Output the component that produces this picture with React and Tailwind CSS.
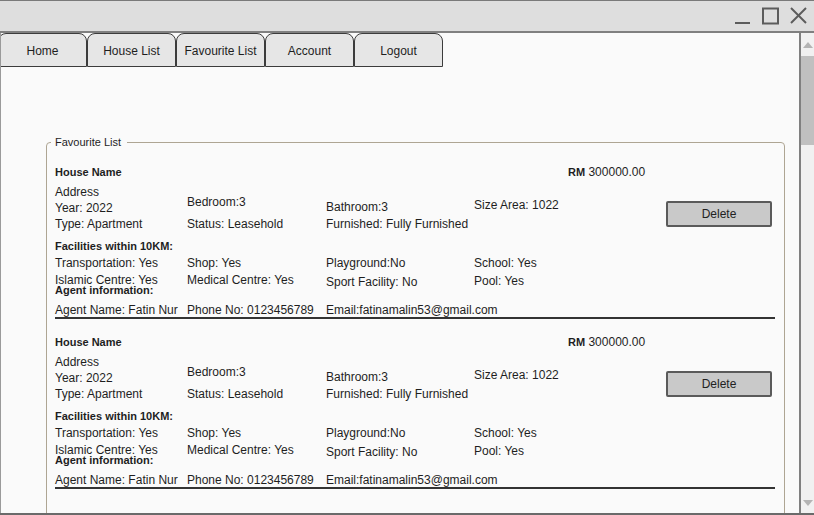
import React from 'react'

const tabs = ['Home', 'House List', 'Favourite List', 'Account', 'Logout']

const widths = ['w-[132px]', 'w-[139px]', 'w-[148px]', '']

function Row({ h, cells }) {
  return (
    <div className={`flex items-start ${h}`}>
      {cells.map(([text, shift], i) => (
        <span key={i} className={`${widths[i]} shrink-0 whitespace-nowrap leading-[16px] ${shift || ''}`}>
          {text}
        </span>
      ))}
    </div>
  )
}

function Heading({ h, children }) {
  return (
    <div className={`${h} leading-[16px] text-[11px] font-bold whitespace-nowrap`}>{children}</div>
  )
}

function HouseCard() {
  return (
    <div className="mb-[15px]">
      <div className="flex">
        <div className="w-[611px]">
          {/* Name + price */}
          <div className="h-[20px] flex items-start leading-[16px]">
            <span className="w-[513px] text-[11px] font-bold">House Name</span>
            <span className="whitespace-nowrap">
              <b className="text-[11px]">RM</b> 300000.00
            </span>
          </div>
          <Row h="h-[16px]" cells={[['Address']]} />
          <Row
            h="h-[16px]"
            cells={[
              ['Year: 2022'],
              ['Bedroom:3', '-mt-[6px]'],
              ['Bathroom:3', '-mt-[1px]'],
              ['Size Area: 1022', '-mt-[3px]'],
            ]}
          />
          <Row
            h="h-[22px]"
            cells={[['Type: Apartment'], ['Status: Leasehold'], ['Furnished: Fully Furnished']]}
          />
          <Heading h="h-[17px]">Facilities within 10KM:</Heading>
          <Row
            h="h-[17px]"
            cells={[['Transportation: Yes'], ['Shop: Yes'], ['Playground:No'], ['School: Yes']]}
          />
          <Row
            h="h-[10px]"
            cells={[
              ['Islamic Centre: Yes'],
              ['Medical Centre: Yes'],
              ['Sport Facility: No', 'mt-[2px]'],
              ['Pool: Yes', 'mt-[1px]'],
            ]}
          />
          <Heading h="h-[20px]">Agent information:</Heading>
          <Row
            h="h-[15px]"
            cells={[['Agent Name: Fatin Nur'], ['Phone No: 0123456789'], ['Email:fatinamalin53@gmail.com']]}
          />
        </div>

        {/* Delete button */}
        <div className="pt-[37px]">
          <button className="w-[106px] h-[26px] bg-[#c9c9c9] border-2 border-[#5a5a5a] rounded-[2px] text-[12px] text-[#222] flex items-center justify-center">
            Delete
          </button>
        </div>
      </div>
      <div className="w-[720px] h-[2px] bg-[#333]" />
    </div>
  )
}

export default function App() {
  return (
    <div className="w-[814px] h-[515px] flex flex-col overflow-hidden bg-[#fafafa] text-[12px] text-[#1e1e1e] font-['Liberation_Sans',Arial,sans-serif]">
      {/* Title bar */}
      <div className="h-[33px] shrink-0 bg-[#dedede] border-t border-[#7a7a7a] border-b-2 border-b-[#808080] flex justify-end">
        <svg width="80" height="30" viewBox="0 0 80 30" fill="none" stroke="#5c5c5c" strokeWidth="2">
          <line x1="1" y1="22" x2="16" y2="22" />
          <rect x="29" y="7.5" width="15" height="15" />
          <line x1="57" y1="7" x2="72" y2="22" />
          <line x1="72" y1="7" x2="57" y2="22" />
        </svg>
      </div>

      <div className="flex-1 flex min-h-0">
        {/* Content */}
        <div className="flex-1 min-w-0 border-l border-[#9a9a9a] overflow-hidden">
          {/* Tabs */}
          <div className="flex -ml-[3px]">
            {tabs.map((t) => (
              <div
                key={t}
                className="w-[89px] h-[34px] pt-[2px] bg-[#e6e6e6] border border-[#3c3c3c] rounded-t-[8px] flex items-center justify-center whitespace-nowrap"
              >
                {t}
              </div>
            ))}
          </div>

          {/* Favourite list */}
          <fieldset className="mt-[68px] ml-[45px] w-[739px] h-[420px] border border-[#aea593] rounded-t-[4px] pl-[8px] pt-[15px]">
            <legend className="-ml-[4px] pl-[4px] pr-[6px] text-[11px] leading-[14px]">Favourite List</legend>
            <HouseCard />
            <HouseCard />
          </fieldset>
        </div>

        {/* Scrollbar */}
        <div className="w-[15px] shrink-0 border-l-2 border-[#808080] bg-[#f1f1f1] flex flex-col">
          <div className="h-[23px] flex items-center justify-center">
            <svg width="10" height="6" viewBox="0 0 10 6">
              <polygon points="5,0 10,6 0,6" fill="#b4b4b4" />
            </svg>
          </div>
          <div className="h-[89px] bg-[#c0c0c0]" />
          <div className="flex-1" />
          <div className="h-[20px] flex items-center justify-center">
            <svg width="10" height="6" viewBox="0 0 10 6">
              <polygon points="0,0 10,0 5,6" fill="#b4b4b4" />
            </svg>
          </div>
        </div>
      </div>

      <div className="h-[2px] shrink-0 bg-[#6a6a6a]" />
    </div>
  )
}
